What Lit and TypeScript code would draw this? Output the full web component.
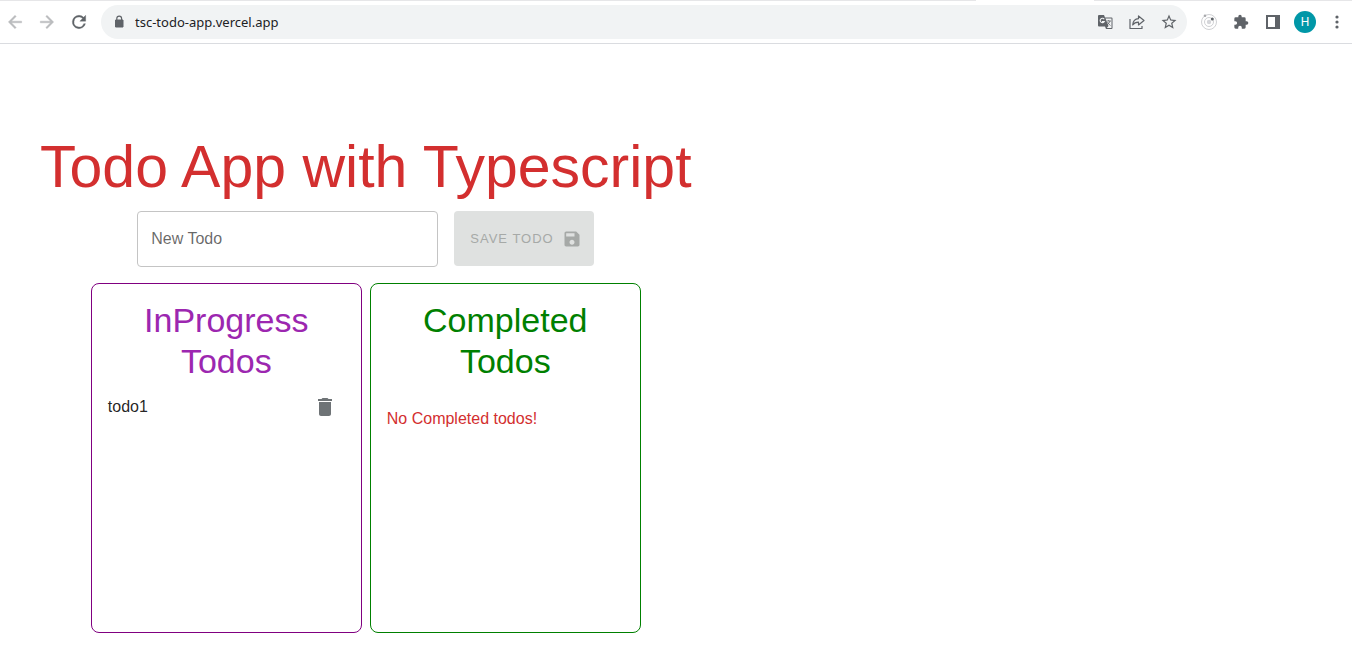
import { LitElement, html, css } from "lit";
import { customElement, state } from "lit/decorators.js";

@customElement("browser-bar")
class BrowserBar extends LitElement {
  static styles = css`
    :host {
      display: block;
      background: linear-gradient(to right, #e6e6e8 calc(100% - 376px), #fff 0, #fff calc(100% - 258px), #e6e6e8 0) top / 100% 1px no-repeat #fff;
      border-bottom: 1px solid #dadce0;
      font-family: "Open Sans", "Noto Sans", sans-serif;
    }
    .bar { display: flex; align-items: center; height: 43px; padding-top: 1px; box-sizing: border-box; }
    .nav { display: flex; gap: 8px; padding-left: 3px; margin-right: 10px; }
    button { border: 0; padding: 0; background: none; width: 24px; height: 24px; display: grid; place-items: center; color: #5f6368; }
    button:disabled { color: #babcbe; }
    svg { display: block; fill: currentColor; }
    .address { flex: 1; min-width: 0; display: flex; align-items: center; height: 34px; border-radius: 17px; background: #f1f3f4; padding: 0 6px 0 12px; box-sizing: border-box; color: #5f6368; }
    .url { flex: 1; min-width: 0; border: 0; background: none; outline: 0; padding: 0; margin-left: 10px; height: 24px; font: 13px/24px "Noto Sans", "Open Sans", sans-serif; color: #202124; }
    .inside { display: flex; gap: 8px; }
    .tools { display: flex; gap: 8px; margin: 0 3px 0 10px; }
    .avatar { width: 22px; height: 22px; margin: 1px; border-radius: 50%; background: #0097a7; color: #fff; font: 12px/22px Roboto, sans-serif; }
  `;
  render() {
    return html`<header class="bar">
      <nav class="nav">
        <button disabled aria-label="Back"><svg width="20" height="20" viewBox="0 0 24 24"><path d="M20 11H7.830l5.590-5.590L12 4l-8 8 8 8 1.410-1.410L7.830 13H20v-2z" stroke="currentColor" stroke-width=".5"/></svg></button>
        <button disabled aria-label="Forward"><svg width="20" height="20" viewBox="0 0 24 24"><path d="M12 4l-1.410 1.410L16.170 11H4v2h12.170l-5.580 5.590L12 20l8-8z" stroke="currentColor" stroke-width=".5"/></svg></button>
        <button aria-label="Reload"><svg width="20" height="20" viewBox="0 0 24 24"><path d="M17.650 6.350A7.960 7.960 0 0 0 12 4a8 8 0 1 0 7.730 10h-2.080A6 6 0 1 1 12 6c1.660 0 3.140.69 4.220 1.780L13 11h7V4l-2.350 2.350z" stroke="currentColor" stroke-width=".4"/></svg></button>
      </nav>
      <div class="address">
        <svg width="12" height="14" viewBox="0 0 12 14"><path d="M2.500 5h7.500v7H2.500z" stroke="currentColor" stroke-linejoin="round"/><path d="M3.800 5V3.500a2.400 2.400 0 0 1 4.800 0V5" fill="none" stroke="currentColor" stroke-width="1.200"/></svg>
        <input class="url" aria-label="Address" .value=${"tsc-todo-app.vercel.app"}>
        <div class="inside">
          <button aria-label="Translate"><svg width="16" height="16" viewBox="0 0 16 16"><path d="M2 1h5l1 2.500h6.500q1 0 1 1V14q0 1-1 1H9l-1-2.500H2q-1 0-1-1V2q0-1 1-1z"/><path d="M8.500 4.500H14.500V14H9.800l1.700-2z" fill="#f1f3f4"/><path d="M7.200 5.200A2.200 2.200 0 1 0 7.300 7.500H5" fill="none" stroke="#f1f3f4" stroke-width="1.100"/><path d="M9.500 7h4.500M11.700 6v1M13 7q-.8 2.500-3 4M10.500 8q.8 2 3 3.500" fill="none" stroke="currentColor" stroke-width=".8"/></svg></button>
          <button aria-label="Share"><svg width="16" height="16" viewBox="0 0 16 16" fill="none"><path d="M1 5v9.500h12V12M9.500 2v2.700C5.500 5 4 7.500 3.700 11c1.300-2 3-2.800 5.800-2.800V11L15 6.500z" fill="none" stroke="currentColor" stroke-width="1.200" stroke-linejoin="round"/></svg></button>
          <button aria-label="Bookmark"><svg width="18" height="18" viewBox="0 0 24 24"><path d="M22 9.240l-7.190-.62L12 2 9.190 8.630 2 9.240l5.460 4.730L5.820 21 12 17.270 18.180 21l-1.630-7.030L22 9.240zM12 15.400l-3.760 2.270 1-4.280-3.320-2.880 4.380-.38L12 6.100l1.710 4.040 4.380.38-3.320 2.880 1 4.280L12 15.400z"/></svg></button>
        </div>
      </div>
      <div class="tools">
        <button aria-label="React tools"><svg width="18" height="18" viewBox="0 0 18 18"><g fill="none" stroke="#d0d1d4"><circle cx="9" cy="9" r="7.500"/><circle cx="9" cy="9" r="4.500"/></g><circle cx="9" cy="9" r="2.200" fill="#d5d6da"/><circle cx="12.300" cy="6" r="1.500" fill="#5f6368"/><circle cx="5" cy="2.800" r="1.300" fill="#a8a9ac"/></svg></button>
        <button aria-label="Extensions"><svg width="16" height="16" viewBox="0 0 24 24"><path d="M20.500 11H19V7a2 2 0 0 0-2-2h-4V3.500a2.500 2.500 0 0 0-5 0V5H4a2 2 0 0 0-2 2v3.800h1.500a2.700 2.700 0 0 1 0 5.400H2V20a2 2 0 0 0 2 2h3.800v-1.500a2.700 2.700 0 0 1 5.400 0V22H17a2 2 0 0 0 2-2v-4h1.500a2.500 2.500 0 0 0 0-5z"/></svg></button>
        <button aria-label="Side panel"><svg width="14" height="14" viewBox="0 0 14 14"><path d="M0 0h14v14H0zM2 2v10h7V2z" fill-rule="evenodd"/></svg></button>
        <button class="avatar" aria-label="Profile">H</button>
        <button aria-label="Menu"><svg width="4" height="14" viewBox="0 0 4 14"><circle cx="2" cy="2" r="1.600"/><circle cx="2" cy="7" r="1.600"/><circle cx="2" cy="12" r="1.600"/></svg></button>
      </div>
    </header>`;
  }
}

@customElement("app-root")
class AppRoot extends LitElement {
  @state() private todos = ["todo1"];

  static styles = css`
    :host { display: block; min-height: 100vh; background: #fff; color: rgba(0, 0, 0, 0.870); font: 16px/24px "Liberation Sans", Arial, sans-serif; }
    * { box-sizing: border-box; }
    h1, h2, p, ul { margin: 0; padding: 0; font-weight: 400; }
    .page { display: flex; flex-direction: column; align-items: center; width: fit-content; padding: 87px 40px 32px; }
    h1 { font-size: 59px; line-height: 72px; color: #d32f2f; }
    .form { display: flex; gap: 16px; margin-top: 8px; }
    .field { display: grid; width: 301px; height: 56px; }
    .field > * { grid-area: 1 / 1; }
    .field label { align-self: center; padding-left: 14px; color: rgba(0, 0, 0, 0.600); pointer-events: none; z-index: 1; }
    .field input { width: 100%; border: 1px solid #c4c4c4; border-radius: 4px; padding: 0 14px; font: inherit; background: #fff; }
    .field input:not(:placeholder-shown) + label { visibility: hidden; }
    .save { display: flex; align-items: center; gap: 8px; width: 140px; height: 55px; border: 0; border-radius: 4px; padding: 0 12px 0 16px; justify-content: space-between; background: #dfe1e0; color: #a6a9a7; font: 13px/24px "Liberation Sans", Arial, sans-serif; letter-spacing: 1px; white-space: nowrap; }
    svg { display: block; fill: currentColor; }
    .boards { display: flex; gap: 8px; margin-top: 16px; }
    .board { width: 271px; min-height: 350px; padding: 16px; border: 1px solid currentColor; border-radius: 8px; }
    .progress { color: purple; }
    .done { color: green; }
    h2 { font-size: 34px; line-height: 41px; text-align: center; padding: 0 32px; }
    .progress h2 { color: #9c27b0; }
    ul { list-style: none; color: rgba(0, 0, 0, 0.870); }
    li { display: flex; align-items: center; justify-content: space-between; height: 50px; padding-right: 8px; }
    .trash { border: 0; background: none; padding: 0; color: #6e7376; }
    .empty { color: #d32f2f; padding-top: 25px; }
  `;

  private removeTodo(index: number) {
    this.todos = this.todos.filter((_, i) => i !== index);
  }

  render() {
    return html`<browser-bar></browser-bar>
      <main class="page">
        <h1>Todo App with Typescript</h1>
        <form class="form">
          <div class="field"><input id="todo" placeholder=" "><label for="todo">New Todo</label></div>
          <button class="save" type="button" disabled>SAVE TODO
            <svg width="20" height="20" viewBox="0 0 24 24"><path d="M17 3H5c-1.110 0-2 .9-2 2v14c0 1.100.89 2 2 2h14c1.100 0 2-.9 2-2V7l-4-4zm-5 16c-1.660 0-3-1.340-3-3s1.340-3 3-3 3 1.340 3 3-1.340 3-3 3zm3-10H5V5h10v4z"/></svg>
          </button>
        </form>
        <div class="boards">
          <section class="board progress">
            <h2>InProgress Todos</h2>
            <ul>${this.todos.map((t, i) => html`<li>${t}
              <button class="trash" aria-label="Delete ${t}" @click=${() => this.removeTodo(i)}><svg width="24" height="24" viewBox="0 0 24 24"><path d="M6 19c0 1.100.9 2 2 2h8c1.100 0 2-.9 2-2V7H6v12zM19 4h-3.500l-1-1h-5l-1 1H5v2h14V4z"/></svg></button></li>`)}</ul>
          </section>
          <section class="board done">
            <h2>Completed Todos</h2>
            <p class="empty">No Completed todos!</p>
          </section>
        </div>
      </main>`;
  }
}
